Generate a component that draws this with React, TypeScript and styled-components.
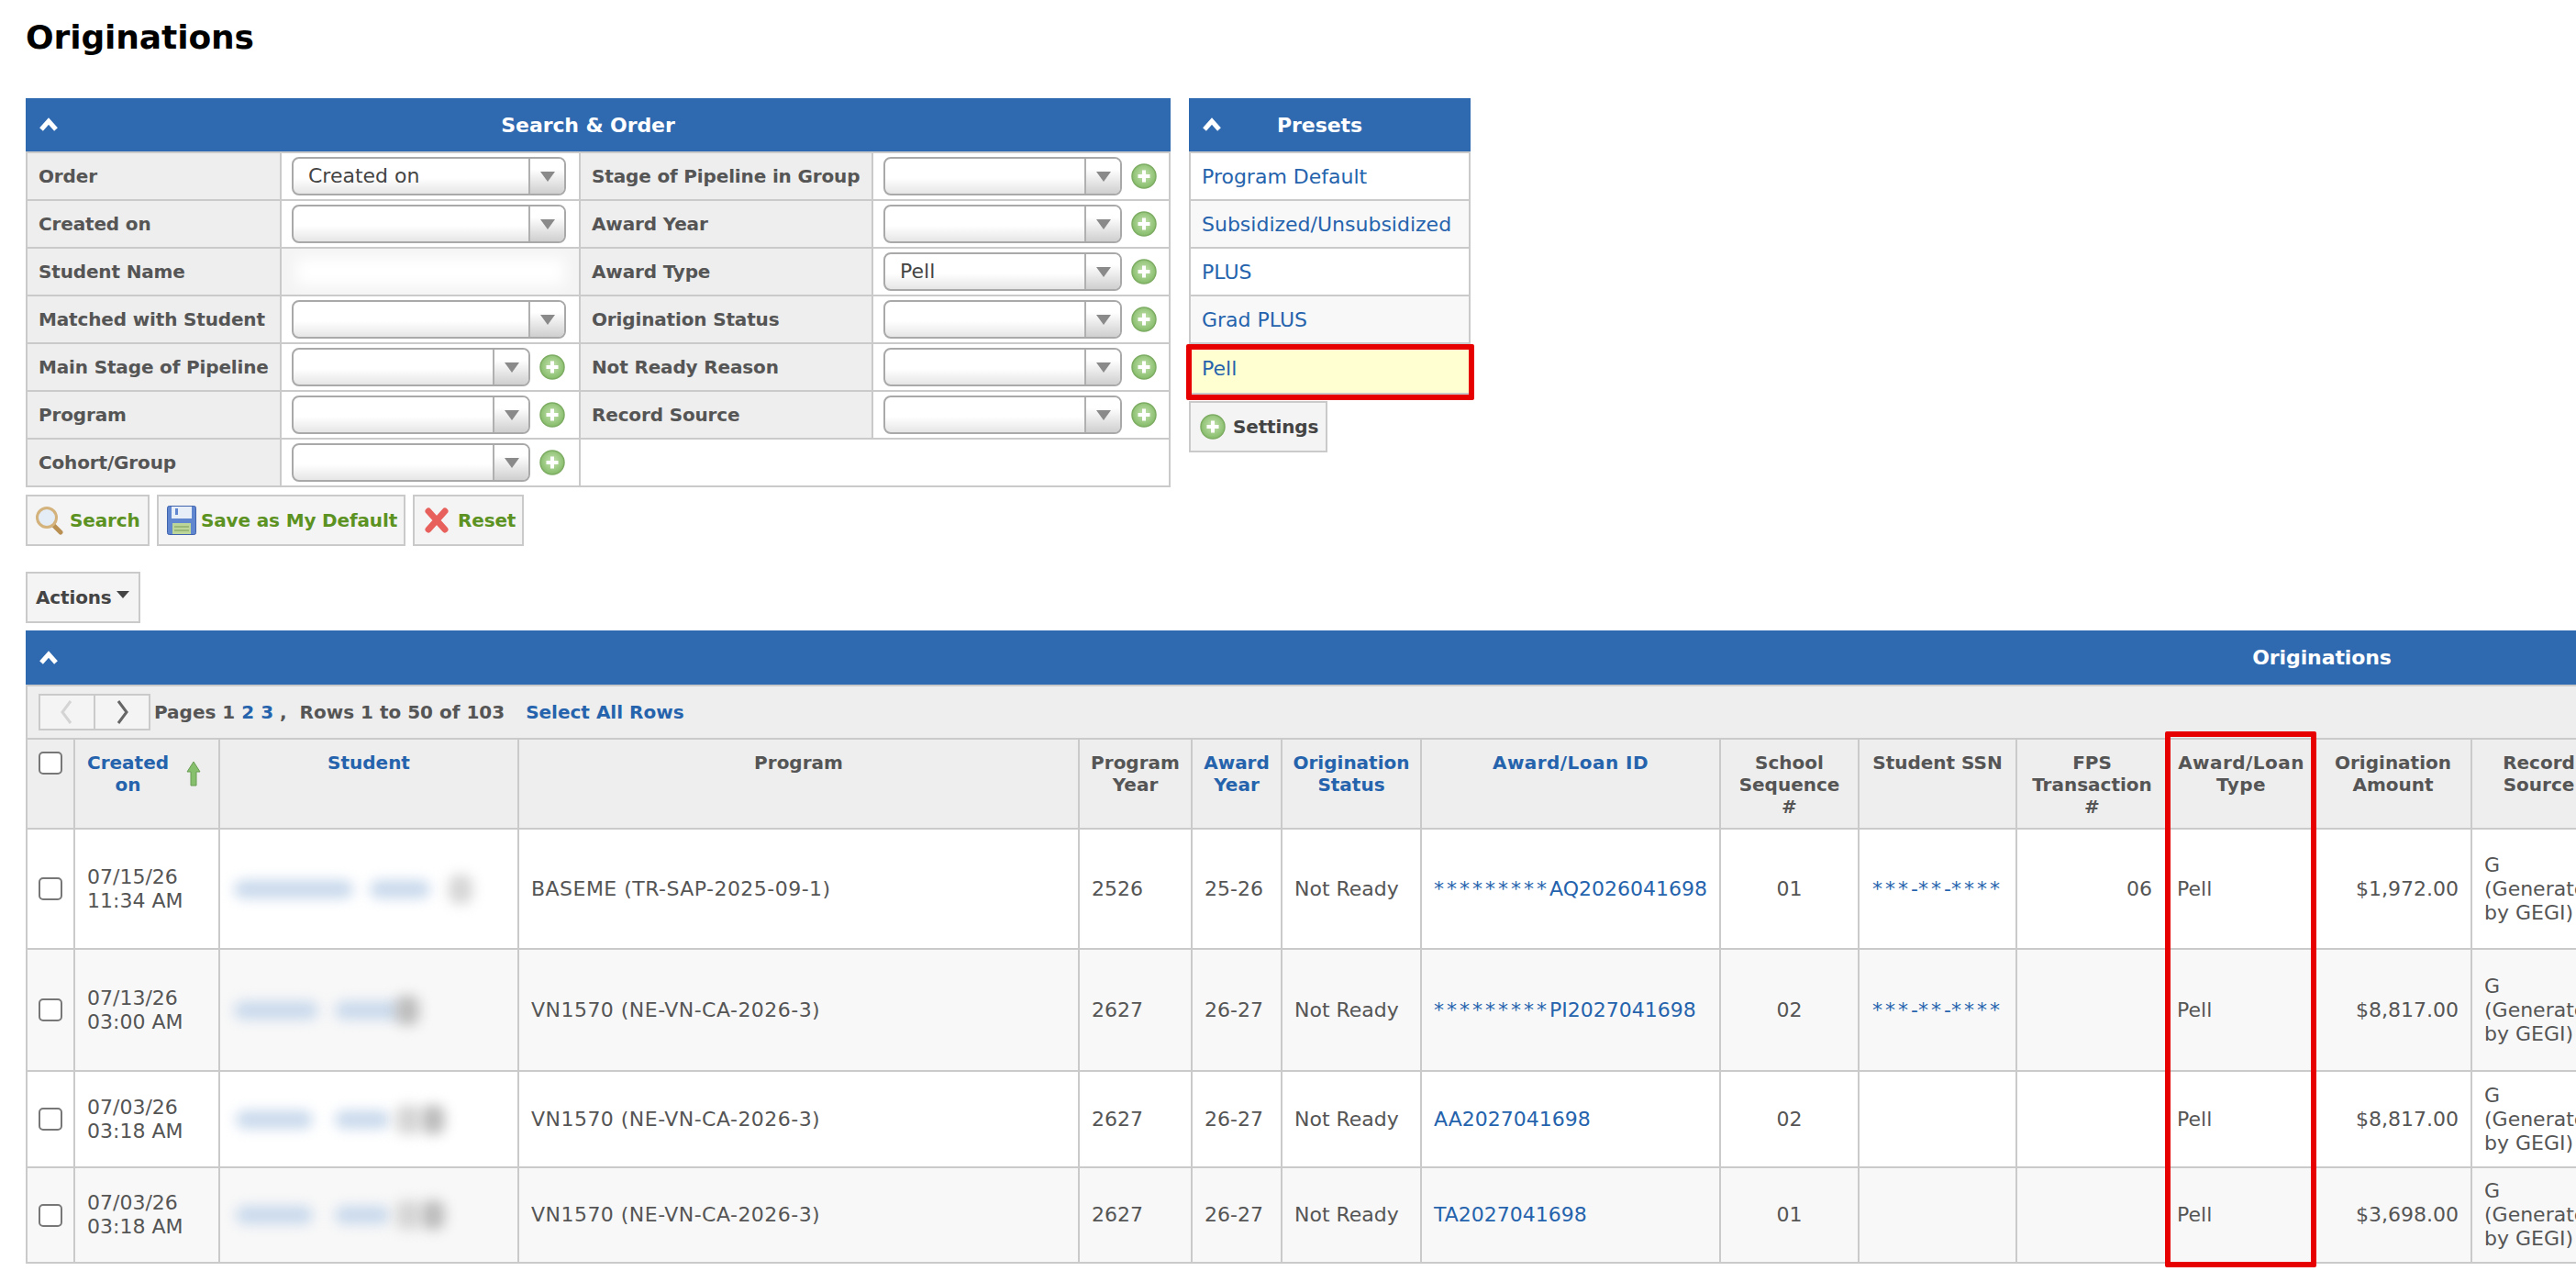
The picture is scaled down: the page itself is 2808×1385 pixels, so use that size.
import React from "react";
import styled, { createGlobalStyle } from "styled-components";

const BLUE = "#2f6ab0";
const LINK = "#2563ad";
const LINE = "#cacaca";
const TEXT = "#555";

const GlobalStyle = createGlobalStyle`
  html, body {
    margin: 0;
    height: 100%;
    overflow: hidden;
    background: #fff;
  }
  body {
    font-family: "DejaVu Sans", Verdana, sans-serif;
    font-size: 22px;
    color: ${TEXT};
  }
`;

const Page = styled.div`
  width: 5070px;
  padding-left: 28px;
  box-sizing: border-box;
`;

const Title = styled.h1`
  margin: 0;
  height: 107px;
  padding-top: 18px;
  box-sizing: border-box;
  font-size: 36px;
  line-height: 46px;
  letter-spacing: -0.1px;
  color: #000;
`;

const TopRow = styled.div`
  display: flex;
  gap: 20px;
  align-items: flex-start;
`;

const Panel = styled.section<{ $w: number }>`
  width: ${(p) => p.$w}px;
  position: relative;
`;

const PanelHead = styled.div<{ $h?: number }>`
  display: flex;
  align-items: center;
  height: ${(p) => p.$h ?? 58}px;
  background: ${BLUE};
  color: #fff;
  font-weight: bold;
  font-size: 22px;
  letter-spacing: -0.1px;
  padding-left: 14px;
  border-bottom: 2px solid ${LINE};
  box-sizing: content-box;
`;

const PanelTitle = styled.span`
  flex: 1;
  text-align: center;
  padding-right: 58px;
`;

const FormTable = styled.table`
  width: 100%;
  table-layout: fixed;
  border-collapse: separate;
  border-spacing: 0;
  border-left: 2px solid ${LINE};
`;

const FormCell = styled.td`
  height: 52px;
  padding: 0 0 0 11px;
  box-sizing: border-box;
  border-right: 2px solid ${LINE};
  border-bottom: 2px solid ${LINE};
`;

const LabelCell = styled(FormCell)`
  padding-left: 12px;
  background: #eee;
  font-weight: bold;
  font-size: 20px;
  letter-spacing: -0.15px;
  white-space: nowrap;
`;

const BlurCell = styled(FormCell)`
  padding: 0;
  background: #f4f4f4;
  overflow: hidden;
`;

const BlurFill = styled.div`
  height: 30px;
  margin: 0 16px;
  background: #fff;
  filter: blur(8px);
`;

const FieldWrap = styled.div`
  display: flex;
  align-items: center;
  gap: 10px;
`;

const SelectBox = styled.div<{ $w: number }>`
  width: ${(p) => p.$w}px;
  height: 42px;
  box-sizing: border-box;
  display: flex;
  border: 2px solid #a9a9a9;
  border-radius: 8px;
  overflow: hidden;
  background: linear-gradient(#fff 55%, #e6e6e6);
`;

const SelectValue = styled.span`
  flex: 1;
  padding-left: 16px;
  line-height: 38px;
  color: #444;
`;

const SelectArrow = styled.span`
  width: 37px;
  display: flex;
  align-items: center;
  justify-content: center;
  border-left: 2px solid #b0b0b0;
  background: linear-gradient(#fff 30%, #cfcfcf);

  &::after {
    content: "";
    border-left: 8px solid transparent;
    border-right: 8px solid transparent;
    border-top: 11px solid #8a8a8a;
  }
`;

const PresetRow = styled.a<{ $alt?: boolean; $active?: boolean }>`
  display: flex;
  align-items: center;
  position: relative;
  box-sizing: border-box;
  height: ${(p) => (p.$active ? 55 : 52)}px;
  padding-left: 12px;
  border: solid ${LINE};
  border-width: 0 2px 2px;
  color: ${LINK};
  background: ${(p) => (p.$active ? "#ffffd2" : p.$alt ? "#f8f8f8" : "#fff")};
`;

const PresetMark = styled.span`
  position: absolute;
  left: -5px;
  right: -6px;
  top: 0;
  height: 61px;
  border: 6px solid #e60000;
  border-radius: 2px;
  box-sizing: border-box;
`;

const Button = styled.button<{ $green?: boolean }>`
  display: inline-flex;
  align-items: center;
  height: 56px;
  margin: 0;
  box-sizing: border-box;
  background: #f4f4f4;
  border: 2px solid ${LINE};
  border-radius: 0;
  font: bold 20px "DejaVu Sans", Verdana, sans-serif;
  letter-spacing: -0.15px;
  color: ${(p) => (p.$green ? "#5c9222" : "#444")};
`;

const SettingsButton = styled(Button)`
  margin-top: 7px;
  width: 151px;
  padding: 0 0 0 10px;
  gap: 8px;
`;

const ButtonRow = styled.div`
  display: flex;
  gap: 8px;
  margin-top: 8px;
`;

const ActionButton = styled(Button)<{ $w: number; $pad: number; $gap: number }>`
  width: ${(p) => p.$w}px;
  padding: 0 0 0 ${(p) => p.$pad}px;
  gap: ${(p) => p.$gap}px;
`;

const ActionsButton = styled(Button)`
  margin-top: 28px;
  width: 125px;
  padding: 0 0 0 9px;
  gap: 5px;

  &::after {
    content: "";
    margin-top: -6px;
    border-left: 7px solid transparent;
    border-right: 7px solid transparent;
    border-top: 8px solid #444;
  }
`;

const ListPanel = styled(Panel)`
  margin-top: 8px;
`;

const Toolbar = styled.div`
  display: flex;
  align-items: center;
  height: 56px;
  padding-left: 12px;
  background: #eee;
  border-left: 2px solid ${LINE};
  font-size: 20px;
  font-weight: bold;
`;

const Pager = styled.div`
  display: flex;
  height: 40px;
  border: 2px solid ${LINE};
  box-sizing: border-box;
  margin-right: 4px;
`;

const PagerStep = styled.span`
  width: 58px;
  display: flex;
  align-items: center;
  justify-content: center;
  background: #f4f4f4;

  & + & {
    border-left: 2px solid ${LINE};
  }
`;

const BoldLink = styled.a`
  color: ${LINK};
`;

const SelectAll = styled.a`
  margin-left: 23px;
  color: ${LINK};
`;

const DataTable = styled.table`
  width: 2814px;
  table-layout: fixed;
  border-collapse: separate;
  border-spacing: 0;
  border-left: 2px solid ${LINE};
  border-top: 2px solid ${LINE};
`;

const HeadCell = styled.th`
  height: 98px;
  box-sizing: border-box;
  padding: 13px 4px 0;
  vertical-align: top;
  text-align: center;
  background: #eee;
  border-right: 2px solid ${LINE};
  border-bottom: 2px solid ${LINE};
  font-size: 20px;
  line-height: 24px;
  color: ${TEXT};
`;

const HeadLink = styled.a`
  color: ${LINK};
`;

const WideHead = styled.span`
  letter-spacing: 0.45px;
`;

const SortHead = styled.div`
  display: flex;
  align-items: center;
  gap: 19px;
  padding-left: 9px;
`;

const BodyRow = styled.tr<{ $h: number; $alt: boolean }>`
  height: ${(p) => p.$h}px;
  background: ${(p) => (p.$alt ? "#f8f8f8" : "#fff")};
`;

const BodyCell = styled.td<{ $align?: string; $left?: number; $right?: number; $wide?: boolean }>`
  padding: 0 ${(p) => p.$right ?? 13}px 0 ${(p) => p.$left ?? 13}px;
  box-sizing: border-box;
  text-align: ${(p) => p.$align ?? "left"};
  border-right: 2px solid ${LINE};
  border-bottom: 2px solid ${LINE};
  line-height: 26px;
  letter-spacing: ${(p) => (p.$wide ? "0.47px" : "normal")};
  color: ${TEXT};
`;

const CheckCell = styled.div`
  display: flex;
  padding-left: 12px;
`;

const HeadCheck = styled(CheckCell)`
  margin: 0 -4px;
`;

const Check = styled.span`
  width: 26px;
  height: 25px;
  box-sizing: border-box;
  border: 2px solid #777;
  border-radius: 5px;
  background: #fff;
`;

const CheckTd = styled(BodyCell)`
  padding: 0;
`;

const Link = styled.a`
  color: ${LINK};
`;

// DejaVu draws the asterisk narrower than the page's font did
const Stars = styled.span`
  letter-spacing: 3px;
`;

const NameBlur = styled.div`
  display: flex;
  align-items: center;
`;

const Blur = styled.span<{ $w: number; $ml: number; $tone: string }>`
  width: ${(p) => p.$w}px;
  margin-left: ${(p) => p.$ml}px;
  height: ${(p) => (p.$tone === "blue" ? 20 : 32)}px;
  flex: none;
  border-radius: 10px;
  background: ${(p) => (p.$tone === "blue" ? "#c9d9ec" : p.$tone === "pale" ? "#d6d6d6" : "#bdbdbd")};
  filter: blur(7px);
`;

const ColumnMark = styled.div`
  position: absolute;
  left: 2332px;
  top: 110px;
  width: 165px;
  height: 584px;
  box-sizing: border-box;
  border: 6px solid #e60000;
  border-radius: 2px;
`;

const Chevron = () => (
  <svg width="22" height="16" viewBox="0 0 22 16">
    <path d="M3 13 L11 4 L19 13" fill="none" stroke="#fff" strokeWidth="5" />
  </svg>
);

const PlusIcon = () => (
  <svg width="28" height="28" viewBox="0 0 28 28" style={{ flex: "none" }}>
    <defs>
      <radialGradient id="plusFill" cx="50%" cy="45%" r="60%">
        <stop offset="0%" stopColor="#c6e3b2" />
        <stop offset="100%" stopColor="#7fb862" />
      </radialGradient>
    </defs>
    <circle cx="14" cy="14" r="13" fill="url(#plusFill)" stroke="#7dac63" strokeWidth="1.5" />
    <path d="M14 7.5v13M7.5 14h13" stroke="#fff" strokeWidth="4" />
  </svg>
);

const SearchIcon = () => (
  <svg width="32" height="32" viewBox="0 0 32 32">
    <path d="M20 21l8 8" stroke="#b98f52" strokeWidth="5" strokeLinecap="round" />
    <circle cx="13" cy="13" r="10.5" fill="#e4ecf5" stroke="#d3b27c" strokeWidth="3" />
  </svg>
);

const SaveIcon = () => (
  <svg width="32" height="32" viewBox="0 0 32 32">
    <rect x="0.5" y="0.5" width="31" height="31" rx="2" fill="#5f86cf" stroke="#3f63ad" />
    <rect x="5" y="1" width="22" height="13" fill="#e8eef8" />
    <rect x="9" y="3" width="3" height="7" fill="#5f86cf" />
    <rect x="6" y="19" width="20" height="12" fill="#bcd69a" />
    <path d="M8 23h16M8 27h16" stroke="#8fae6d" strokeWidth="1.5" />
  </svg>
);

const ResetIcon = () => (
  <svg width="28" height="28" viewBox="0 0 28 28">
    <path d="M5 4l18 20M23 4L5 24" stroke="#e8605c" strokeWidth="7" strokeLinecap="round" />
  </svg>
);

const SortArrow = () => (
  <svg width="16" height="28" viewBox="0 0 16 28" style={{ flex: "none" }}>
    <path d="M8 1l7 11h-4v15H5V12H1z" fill="#86c06d" stroke="#6a9c55" strokeWidth="1" />
  </svg>
);

const PagerArrow = ({ d, color }: { d: string; color: string }) => (
  <svg width="18" height="26" viewBox="0 0 18 26">
    <path d={d} fill="none" stroke={color} strokeWidth="3" />
  </svg>
);

const Select = ({ value, w }: { value?: string; w: number }) => (
  <SelectBox $w={w}>
    <SelectValue>{value}</SelectValue>
    <SelectArrow />
  </SelectBox>
);

const AddSelect = ({ value }: { value?: string }) => (
  <FieldWrap>
    <Select value={value} w={260} />
    <PlusIcon />
  </FieldWrap>
);

const presets = ["Program Default", "Subsidized/Unsubsidized", "PLUS", "Grad PLUS"];

const heads: { label: React.ReactNode; link?: boolean }[] = [
  { label: <>Program<br />Year</> },
  { label: <>Award<br />Year</>, link: true },
  { label: <>Origination<br />Status</>, link: true },
  { label: <WideHead>Award/Loan ID</WideHead>, link: true },
  { label: <>School<br />Sequence<br />#</> },
  { label: "Student SSN" },
  { label: <>FPS<br />Transaction<br />#</> },
  { label: <WideHead>Award/Loan<br />Type</WideHead> },
  { label: <>Origination<br />Amount</> },
  { label: <>Record<br />Source</> },
];

const widths = [52, 158, 326, 611, 123, 98, 152, 326, 151, 172, 165, 160, 171, 147];

type BlurPart = { w: number; ml: number; tone: string };

const rows: {
  h: number;
  date: string;
  time: string;
  blur: BlurPart[];
  program: string;
  py: string;
  ay: string;
  stars?: string;
  id: string;
  seq: string;
  ssn?: boolean;
  fps?: string;
  amount: string;
}[] = [
  {
    h: 131,
    date: "07/15/26",
    time: "11:34 AM",
    blur: [
      { w: 130, ml: 2, tone: "blue" },
      { w: 66, ml: 18, tone: "blue" },
      { w: 26, ml: 20, tone: "pale" },
    ],
    program: "BASEME (TR-SAP-2025-09-1)",
    py: "2526",
    ay: "25-26",
    stars: "*********",
    id: "AQ2026041698",
    seq: "01",
    ssn: true,
    fps: "06",
    amount: "$1,972.00",
  },
  {
    h: 133,
    date: "07/13/26",
    time: "03:00 AM",
    blur: [
      { w: 92, ml: 2, tone: "blue" },
      { w: 74, ml: 18, tone: "blue" },
      { w: 26, ml: -8, tone: "grey" },
    ],
    program: "VN1570 (NE-VN-CA-2026-3)",
    py: "2627",
    ay: "26-27",
    stars: "*********",
    id: "PI2027041698",
    seq: "02",
    ssn: true,
    amount: "$8,817.00",
  },
  {
    h: 105,
    date: "07/03/26",
    time: "03:18 AM",
    blur: [
      { w: 84, ml: 4, tone: "blue" },
      { w: 60, ml: 24, tone: "blue" },
      { w: 28, ml: 6, tone: "pale" },
      { w: 26, ml: 0, tone: "grey" },
    ],
    program: "VN1570 (NE-VN-CA-2026-3)",
    py: "2627",
    ay: "26-27",
    id: "AA2027041698",
    seq: "02",
    amount: "$8,817.00",
  },
  {
    h: 104,
    date: "07/03/26",
    time: "03:18 AM",
    blur: [
      { w: 84, ml: 4, tone: "blue" },
      { w: 60, ml: 24, tone: "blue" },
      { w: 28, ml: 6, tone: "pale" },
      { w: 26, ml: 0, tone: "grey" },
    ],
    program: "VN1570 (NE-VN-CA-2026-3)",
    py: "2627",
    ay: "26-27",
    id: "TA2027041698",
    seq: "01",
    amount: "$3,698.00",
  },
];

export default function App() {
  return (
    <Page>
      <GlobalStyle />
      <Title>Originations</Title>

      <TopRow>
        <div>
          <Panel $w={1248}>
            <PanelHead>
              <Chevron />
              <PanelTitle>Search &amp; Order</PanelTitle>
            </PanelHead>
            <FormTable>
              <colgroup>
                <col style={{ width: 277 }} />
                <col style={{ width: 326 }} />
                <col style={{ width: 319 }} />
                <col style={{ width: 324 }} />
              </colgroup>
              <tbody>
                <tr>
                  <LabelCell>Order</LabelCell>
                  <FormCell><Select value="Created on" w={299} /></FormCell>
                  <LabelCell>Stage of Pipeline in Group</LabelCell>
                  <FormCell><AddSelect /></FormCell>
                </tr>
                <tr>
                  <LabelCell>Created on</LabelCell>
                  <FormCell><Select w={299} /></FormCell>
                  <LabelCell>Award Year</LabelCell>
                  <FormCell><AddSelect /></FormCell>
                </tr>
                <tr>
                  <LabelCell>Student Name</LabelCell>
                  <BlurCell><BlurFill /></BlurCell>
                  <LabelCell>Award Type</LabelCell>
                  <FormCell><AddSelect value="Pell" /></FormCell>
                </tr>
                <tr>
                  <LabelCell>Matched with Student</LabelCell>
                  <FormCell><Select w={299} /></FormCell>
                  <LabelCell>Origination Status</LabelCell>
                  <FormCell><AddSelect /></FormCell>
                </tr>
                <tr>
                  <LabelCell>Main Stage of Pipeline</LabelCell>
                  <FormCell><AddSelect /></FormCell>
                  <LabelCell>Not Ready Reason</LabelCell>
                  <FormCell><AddSelect /></FormCell>
                </tr>
                <tr>
                  <LabelCell>Program</LabelCell>
                  <FormCell><AddSelect /></FormCell>
                  <LabelCell>Record Source</LabelCell>
                  <FormCell><AddSelect /></FormCell>
                </tr>
                <tr>
                  <LabelCell>Cohort/Group</LabelCell>
                  <FormCell><AddSelect /></FormCell>
                  <FormCell colSpan={2} />
                </tr>
              </tbody>
            </FormTable>
          </Panel>

          <ButtonRow>
            <ActionButton $green $w={135} $pad={8} $gap={6}><SearchIcon />Search</ActionButton>
            <ActionButton $green $w={271} $pad={9} $gap={5}><SaveIcon />Save as My Default</ActionButton>
            <ActionButton $green $w={121} $pad={10} $gap={9}><ResetIcon />Reset</ActionButton>
          </ButtonRow>
          <ActionsButton>Actions</ActionsButton>
        </div>

        <Panel $w={307}>
          <PanelHead>
            <Chevron />
            <PanelTitle>Presets</PanelTitle>
          </PanelHead>
          {presets.map((name, i) => (
            <PresetRow key={name} $alt={i % 2 === 1}>{name}</PresetRow>
          ))}
          <PresetRow $active>
            Pell
            <PresetMark />
          </PresetRow>
          <SettingsButton><PlusIcon />Settings</SettingsButton>
        </Panel>
      </TopRow>

      <ListPanel $w={5028}>
        <PanelHead $h={59}>
          <Chevron />
          <PanelTitle>Originations</PanelTitle>
        </PanelHead>
        <Toolbar>
          <Pager>
            <PagerStep><PagerArrow d="M13 1L4 13l9 12" color="#d4d4d4" /></PagerStep>
            <PagerStep><PagerArrow d="M5 1l9 12-9 12" color="#666" /></PagerStep>
          </Pager>
          Pages 1&nbsp;<BoldLink>2</BoldLink>&nbsp;<BoldLink>3</BoldLink>&nbsp;,&nbsp;&nbsp;Rows 1 to 50 of 103
          <SelectAll>Select All Rows</SelectAll>
        </Toolbar>
        <DataTable>
          <colgroup>
            {widths.map((w, i) => (
              <col key={i} style={{ width: w }} />
            ))}
          </colgroup>
          <thead>
            <tr>
              <HeadCell><HeadCheck><Check /></HeadCheck></HeadCell>
              <HeadCell>
                <SortHead>
                  <HeadLink>Created<br />on</HeadLink>
                  <SortArrow />
                </SortHead>
              </HeadCell>
              <HeadCell><HeadLink>Student</HeadLink></HeadCell>
              <HeadCell>Program</HeadCell>
              {heads.map((head, i) => (
                <HeadCell key={i}>
                  {head.link ? <HeadLink>{head.label}</HeadLink> : head.label}
                </HeadCell>
              ))}
            </tr>
          </thead>
          <tbody>
            {rows.map((row, i) => (
              <BodyRow key={i} $h={row.h} $alt={i % 2 === 1}>
                <CheckTd><CheckCell><Check /></CheckCell></CheckTd>
                <BodyCell>{row.date}<br />{row.time}</BodyCell>
                <BodyCell>
                  <NameBlur>
                    {row.blur.map((part, k) => (
                      <Blur key={k} $w={part.w} $ml={part.ml} $tone={part.tone} />
                    ))}
                  </NameBlur>
                </BodyCell>
                <BodyCell $wide>{row.program}</BodyCell>
                <BodyCell>{row.py}</BodyCell>
                <BodyCell>{row.ay}</BodyCell>
                <BodyCell>Not Ready</BodyCell>
                <BodyCell><Link>{row.stars && <Stars>{row.stars}</Stars>}{row.id}</Link></BodyCell>
                <BodyCell $align="center">{row.seq}</BodyCell>
                <BodyCell $align="center">
                  {row.ssn && <Link><Stars>***</Stars>-<Stars>**</Stars>-<Stars>****</Stars></Link>}
                </BodyCell>
                <BodyCell $align="right" $right={16}>{row.fps}</BodyCell>
                <BodyCell $left={9}>Pell</BodyCell>
                <BodyCell $align="right">{row.amount}</BodyCell>
                <BodyCell>G (Generated by GEGI)</BodyCell>
              </BodyRow>
            ))}
          </tbody>
        </DataTable>
        <ColumnMark />
      </ListPanel>
    </Page>
  );
}
